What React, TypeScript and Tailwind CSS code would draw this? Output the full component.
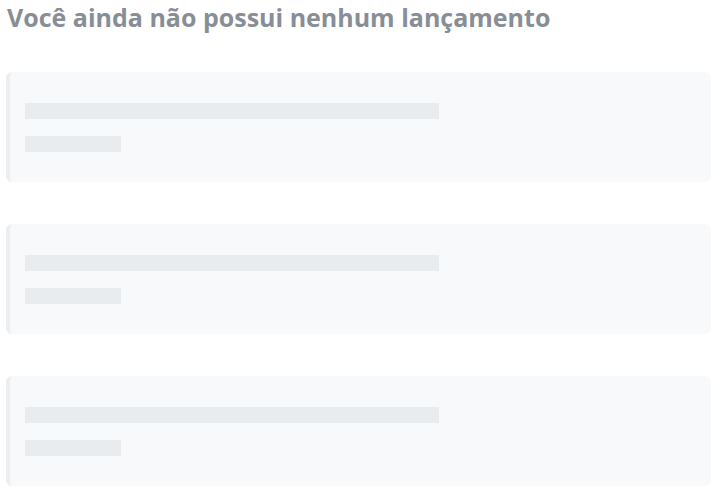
export default function App() {
  const cards = [0, 1, 2];
  return (
    <div className="bg-white min-h-screen px-[6px] pt-[1px] font-['Open_Sans','Noto_Sans',sans-serif]">
      <h1 className="text-[25px] font-bold text-[#878e95] leading-[33px] pl-[1px]">
        Você ainda não possui nenhum lançamento
      </h1>
      <div className="flex flex-col gap-[42px] mt-[38px]">
        {cards.map((c) => (
          <div
            key={c}
            className="h-[110px] rounded-[6px] bg-[#f8f9fa] border-l-[4px] border-[#eceef1] pl-[15px] pt-[31px] flex flex-col gap-[17px]"
          >
            <div className="h-[16px] w-[414px] bg-[#e9ecef]" />
            <div className="h-[16px] w-[96px] bg-[#e9ecef]" />
          </div>
        ))}
      </div>
    </div>
  );
}
